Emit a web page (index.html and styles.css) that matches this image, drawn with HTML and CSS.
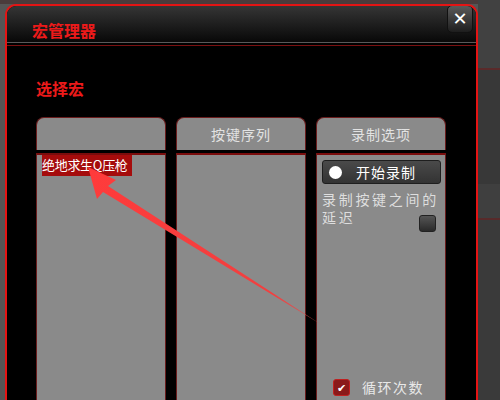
FILE: index.html
```html
<!DOCTYPE html>
<html lang="zh">
<head>
<meta charset="utf-8">
<title>宏管理器</title>
<link rel="stylesheet" href="styles.css">
</head>
<body>
<div class="desk">
  <div class="dialog">
    <div class="titlebar">
      <span class="title">宏管理器</span>
      <button class="close">✕</button>
    </div>
    <div class="sep"></div>
    <div class="body">
      <div class="section">选择宏</div>
      <div class="cols">
        <div class="col">
          <div class="col-head"></div>
          <div class="col-body">
            <div class="item">绝地求生Q压枪</div>
          </div>
        </div>
        <div class="col">
          <div class="col-head">按键序列</div>
          <div class="col-body"></div>
        </div>
        <div class="col">
          <div class="col-head">录制选项</div>
          <div class="col-body opts">
            <div class="rec"><span class="dot"></span><span>开始录制</span></div>
            <div class="delay">录制按键之间的</div>
            <div class="delay-row"><span class="delay2">延迟</span><span class="chk"></span></div>
            <div class="loop"><span class="chk red">✔</span><span>循环次数</span></div>
          </div>
        </div>
      </div>
    </div>
  </div>
  <div class="side"></div>
</div>
<svg class="arrow" width="500" height="400" viewBox="0 0 500 400">
  <defs>
    <linearGradient id="g" x1="88" y1="167" x2="322" y2="325" gradientUnits="userSpaceOnUse">
      <stop offset="0" stop-color="#ff3b3b"/>
      <stop offset="0.8" stop-color="#f04040"/>
      <stop offset="1" stop-color="#e05050" stop-opacity="0.6"/>
    </linearGradient>
  </defs>
  <polygon fill="url(#g)" points="88,167 116,180 108,186 322,325 103,192 97,199"/>
</svg>
</body>
</html>
```
FILE: styles.css
```css
html, body {
  margin: 0;
  padding: 0;
}
body {
  width: 500px;
  height: 400px;
  overflow: hidden;
  background: #3d3d3d;
  font-family: "Noto Sans CJK SC", "Noto Sans", sans-serif;
  position: relative;
}
.desk {
  display: flex;
  height: 400px;
  padding-top: 4px;
  box-sizing: border-box;
  background: linear-gradient(#4a3b3b 0, #4a3b3b 4px, #555 4px);
}
.dialog {
  margin-left: 5px;
  width: 473px;
  height: 396px;
  box-sizing: border-box;
  border: 2px solid #e41414;
  border-bottom: none;
  border-radius: 11px 11px 0 0;
  background: #000;
  overflow: hidden;
  flex-shrink: 0;
}
.side {
  flex: 1;
  margin-top: -4px;
  background: linear-gradient(#414141 0, #414141 68px, #5a2a2a 68px, #5a2a2a 70px, #383838 70px, #383838 184px, #3f3f3f 184px, #3f3f3f 218px, #582a2a 218px, #582a2a 220px, #3a3a3a 220px);
}
.titlebar {
  height: 36px;
  display: flex;
  align-items: flex-start;
  justify-content: space-between;
  background: linear-gradient(#353535, #080808);
  padding-left: 25px;
  padding-right: 3px;
}
.title {
  margin-top: 16px;
  font-size: 16px;
  line-height: 16px;
  font-weight: bold;
  color: #ec1a1a;
}
.close {
  margin-top: -1px;
  width: 26px;
  height: 28px;
  border: 1px solid #111;
  border-radius: 5px;
  background: linear-gradient(#5a5a5a, #1e1e1e);
  color: #fff;
  font-size: 18px;
  font-weight: bold;
  padding: 0;
  line-height: 24px;
  font-family: "DejaVu Sans", sans-serif;
}
.sep {
  height: 2px;
  border-top: 1px solid #5a5a5a;
  border-bottom: 1px solid #7a1010;
}
.body {
  padding-left: 29px;
}
.section {
  padding-top: 34px;
  font-size: 16px;
  line-height: 16px;
  font-weight: bold;
  color: #ec1a1a;
}
.cols {
  margin-top: 21px;
  display: grid;
  grid-template-columns: 130px 130px 130px;
  column-gap: 10px;
}
.col {
  height: 300px;
  display: flex;
  flex-direction: column;
}
.col-head {
  height: 33px;
  box-sizing: border-box;
  background: #8a8a8a;
  border: 1px solid #6a1c1c;
  border-bottom: none;
  border-radius: 8px 8px 0 0;
  color: #e2e2e2;
  font-size: 14px;
  line-height: 32px;
  text-align: center;
  letter-spacing: 1px;
}
.col-body {
  flex: 1;
  margin-top: 3px;
  background: #8a8a8a;
  border: 1px solid #6a1c1c;
  border-top: 2px solid #7a0c0c;
  border-bottom: none;
}
.item {
  margin-left: 5px;
  width: 90px;
  height: 21px;
  background: #a50c0c;
  color: #fff;
  font-size: 13px;
  line-height: 19px;
  white-space: nowrap;
  letter-spacing: -0.3px;
}
.opts {
  padding: 5px 4px 0 5px;
  display: flex;
  flex-direction: column;
}
.rec {
  height: 24px;
  box-sizing: border-box;
  border: 1px solid #1e1e1e;
  border-radius: 3px;
  background: linear-gradient(#4a4a4a, #333);
  display: flex;
  align-items: center;
  color: #fff;
  font-size: 14px;
  gap: 14px;
  padding-left: 6px;
  letter-spacing: 1px;
}
.dot {
  width: 13px;
  height: 13px;
  border-radius: 50%;
  background: #fff;
}
.delay, .delay2 {
  color: #dedede;
  font-size: 14px;
  line-height: 18px;
  letter-spacing: 2.7px;
}
.delay {
  margin-top: 6px;
}
.delay-row {
  display: flex;
  justify-content: space-between;
  align-items: flex-start;
  padding-right: 5px;
}
.delay-row .chk {
  margin-top: 7px;
}
.chk {
  width: 15px;
  height: 15px;
  border-radius: 3px;
  border: 1px solid #222;
  background: linear-gradient(#555, #2a2a2a);
  display: inline-block;
}
.loop {
  margin-top: 147px;
  padding-left: 11px;
  display: flex;
  gap: 12px;
  color: #e8e8e8;
  font-size: 14px;
  letter-spacing: 1.5px;
  line-height: 16px;
}
.chk.red {
  background: #8a1a1a;
  border-color: #c02020;
  color: #fff;
  font-size: 11px;
  line-height: 15px;
  text-align: center;
  letter-spacing: 0;
}
.arrow {
  position: absolute;
  left: 0;
  top: 0;
  pointer-events: none;
}
```
